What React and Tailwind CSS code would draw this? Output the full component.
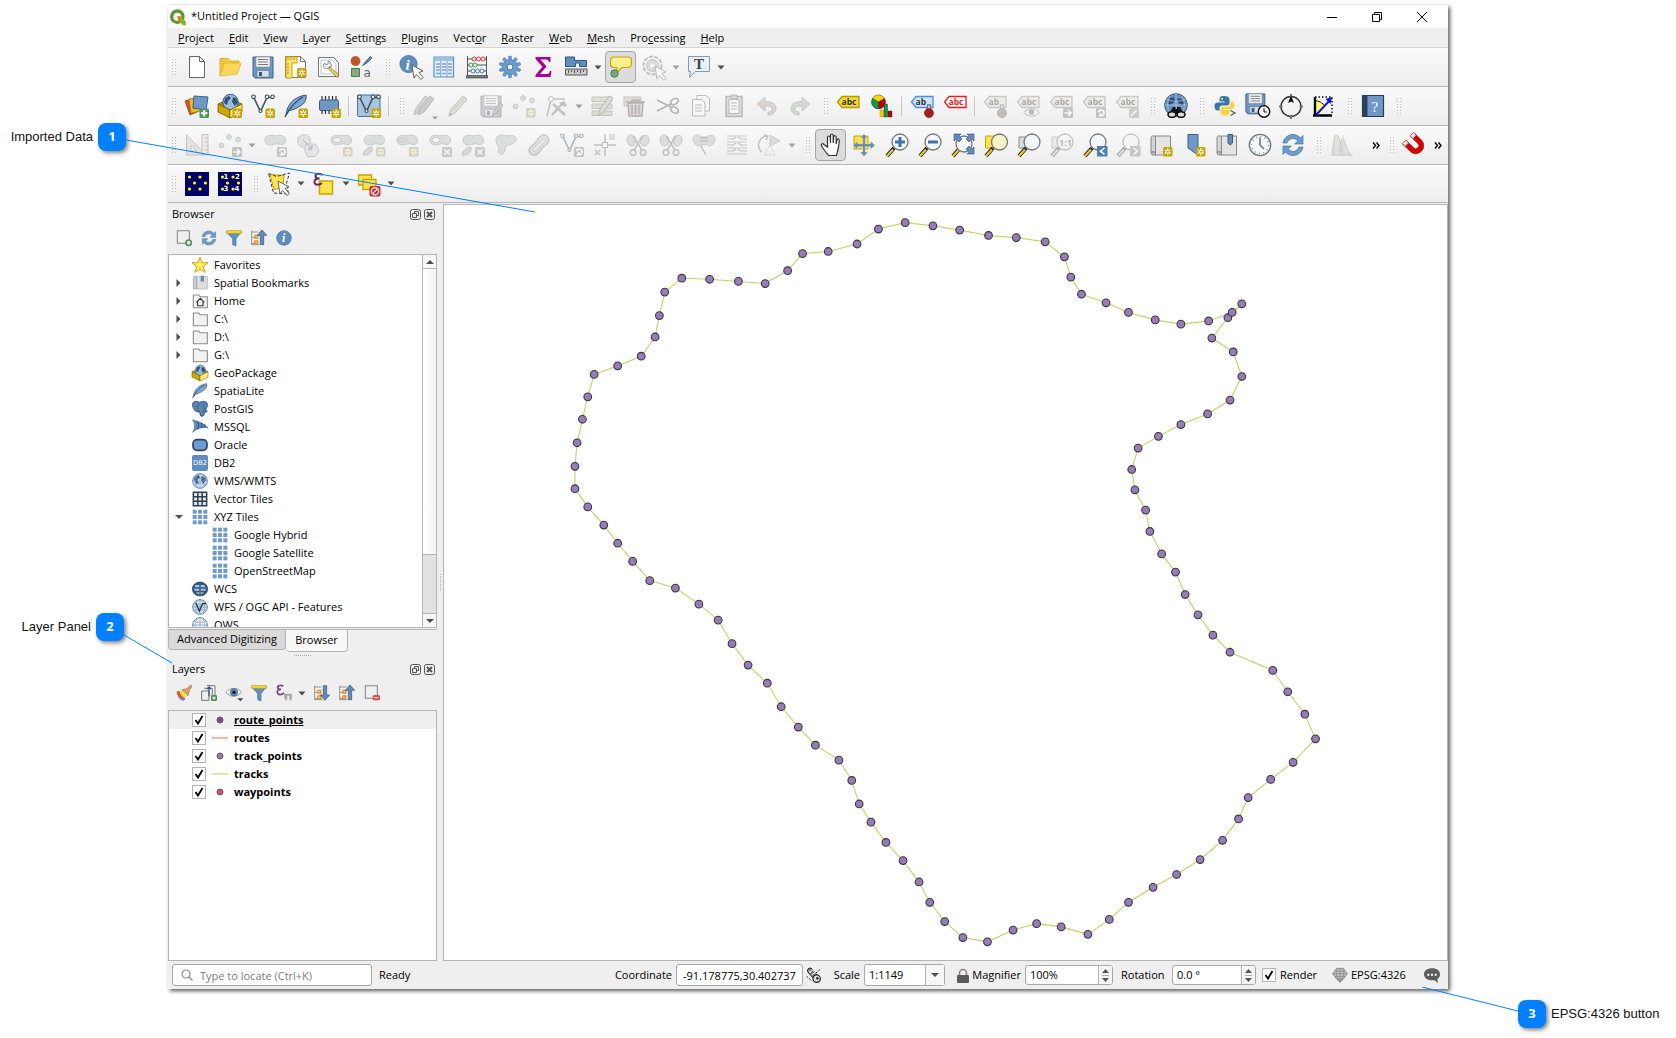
import React from "react";

const Svg = ({ children, size = "size-6", box = "0 0 24 24" }) => (
  <svg viewBox={box} className={`${size} shrink-0 overflow-visible`} fill="none" aria-hidden="true">
    {children}
  </svg>
);

/* ---------- small corner badges ---------- */
const Star = ({ x = 14.5, y = 14.5 }) => (
  <g transform={`translate(${x} ${y})`}>
    <rect width="9.5" height="9.5" rx="1.5" fill="#c9a400" />
    <path d="M4.75 1.2v7.1M1.7 3l6.1 3.5M7.8 3L1.7 6.5" stroke="#fff" strokeWidth="1.3" />
    <circle cx="4.75" cy="4.75" r="1" fill="#c9a400" />
  </g>
);
const Plus = () => (
  <g>
    <rect x="14.5" y="14.5" width="9.5" height="9.5" rx="1.5" fill="#4f9160" />
    <path d="M19.25 16v6.5M16 19.25h6.5" stroke="#fff" strokeWidth="2" />
  </g>
);
const Square = ({ d, fill = "#7d7d7d" }) => (
  <g>
    <rect x="14" y="14" width="10" height="10" rx="1.5" fill={fill} />
    <path d={d} stroke="#fff" strokeWidth="1.7" />
  </g>
);
const ARROW = "M15.5 19h6M19 16l3 3-3 3";
const CROSS = "M16.5 16.5l5 5M21.5 16.5l-5 5";
const TURN = "M16.5 18.5a2.8 2.8 0 1 1 2.5 3.2M19 19v2.700h-2.500";

/* ---------- project toolbar ---------- */
const NewDoc = () => (
  <Svg><path d="M4.500 1.500h10l5 5v16h-15z" fill="#fff" stroke="#666" /><path d="M14.500 1.500v5h5" stroke="#666" /></Svg>
);
const Open = () => (
  <Svg><path d="M2 20.500V3.500h8l2 2.500h9v3H6z" fill="#f3c73c" stroke="#d8a716" strokeWidth=".8" /><path d="M2 21L6 8h17l-3.500 11z" fill="#fbd55c" stroke="#e0af25" strokeWidth=".7" /></Svg>
);
const Floppy = () => (
  <g>
    <path d="M2 2h20v21H4l-2-2z" fill="#6d97c8" stroke="#3f6186" />
    <path d="M5 2h14v10H5z" fill="#f5f5f5" stroke="#888" strokeWidth=".6" />
    <path d="M7 4.500h10M7 7h10M7 9.500h10" stroke="#777" />
    <path d="M6 15.500h12V22H6z" fill="#d9e2ea" stroke="#55708c" strokeWidth=".6" />
    <path d="M8 17h3v4H8z" fill="#375877" />
  </g>
);
const Save = () => <Svg><Floppy /></Svg>;
const Layout = () => (
  <Svg>
    <path d="M1.500 1.500h15l5 5v16h-20z" fill="#fff" stroke="#777" /><path d="M16.500 1.500v5h5" stroke="#777" />
    <path d="M2 2h11v6H8v15H2z" fill="#ffe36b" stroke="#c9a400" /><path d="M4 3v2M7 3v2M10 3v2M3 9h2M3 12h2M3 15h2M3 18h2" stroke="#b38d00" />
    <Star x={13} y={13} />
  </Svg>
);
const LayoutMgr = () => (
  <Svg>
    <path d="M1.500 2.500h15l5 5v14h-20z" fill="#fff" stroke="#777" /><path d="M4 5h11l4 4v10H4z" stroke="#9ac" strokeWidth=".7" />
    <path d="M8 8a3 3 0 1 0 4 4l3-1-2-4-2-1v3l-2 1z" fill="#eee" stroke="#777" strokeWidth=".8" />
    <path d="M13 12l9 8-1.500 2.500L11.500 14z" fill="#f0cf56" stroke="#8e7430" strokeWidth=".8" />
  </Svg>
);
const StyleMgr = () => (
  <Svg>
    <circle cx="5.500" cy="6" r="4.500" fill="#ca5128" stroke="#9c3b18" strokeWidth=".6" />
    <path d="M12.500 10.500l3-4 5-5 1.500 1.500-5 5z" fill="#5b88b8" stroke="#3d5e80" strokeWidth=".8" />
    <path d="M1.500 13.500h8v8h-8z" fill="#82b07c" stroke="#4c7a4a" />
    <text x="13.500" y="22" fontSize="12" fill="#666" fontFamily="DejaVu Sans">a</text>
  </Svg>
);
const Cursor = ({ x = 12, y = 9 }) => (
  <path transform={`translate(${x} ${y})`} d="M0 0l11 6-4 1.500 4 5-2 2-4.500-5L2 13z" fill="#fff" stroke="#555" strokeWidth=".9" />
);
const Identify = () => (
  <Svg><circle cx="9.500" cy="9" r="8.700" fill="#5f8dc0" stroke="#4876a8" strokeWidth=".6" /><text x="6.500" y="14.500" fontSize="15" fontStyle="italic" fontWeight="700" fill="#fff" fontFamily="Liberation Serif">i</text><Cursor x={13} y={10} /></Svg>
);
const Table = () => (
  <Svg><path d="M2 2h19.500v20H2z" fill="#e6f0fa" stroke="#5f8dc0" strokeWidth="1.200" /><path d="M2.500 2.500h18.500v3.500H2.500z" fill="#9dc1e6" /><path d="M4 9h4M10 9h4M16 9h4M4 12h4M10 12h4M16 12h4M4 15h4M10 15h4M16 15h4M4 18.500h4M10 18.500h4M16 18.500h4" stroke="#7ea3cc" strokeWidth="1.500" /><path d="M8.800 6v16M15 6v16" stroke="#5f8dc0" strokeWidth=".8" /></Svg>
);
const Abacus = () => (
  <Svg><path d="M2.500 1v20M21.500 1v20M2.500 4h19M2.500 10h19M2.500 16h19" stroke="#555" /><path d="M1.500 20.500h21v2.500h-21z" fill="#777" stroke="#333" strokeWidth=".6" />
    {[9, 13.5, 18].map((x) => <circle key={x} cx={x} cy="4" r="2" fill="#fff" stroke="#d33" />)}
    {[6, 10].map((x) => <circle key={x} cx={x} cy="10" r="2" fill="#fff" stroke="#3a9a4b" />)}
    {[8, 12.5, 17].map((x) => <circle key={x} cx={x} cy="16" r="2" fill="#fff" stroke="#4778b5" />)}
  </Svg>
);
const Gear = () => (
  <Svg>
    {[0, 36, 72, 108, 144, 180, 216, 252, 288, 324].map((a) => <rect key={a} x="10.500" y="1" width="3" height="6" rx="1" fill="#6c9bd0" stroke="#4474a8" strokeWidth=".5" transform={`rotate(${a} 12 12)`} />)}
    <circle cx="12" cy="12" r="7.500" fill="#6c9bd0" stroke="#4b7db3" strokeWidth=".6" /><circle cx="12" cy="12" r="3" fill="#f4f4f4" stroke="#4474a8" />
  </Svg>
);
const Sigma = () => (
  <Svg><path d="M4.500 2h15v5h-1.500c-.5-2-1.500-2.500-3-2.500H9.500l6 7-6.500 7.500h7c2 0 2.500-1 3-3h1.500l-1 6h-15v-2l7-8.300L4.500 4z" fill="#a3009c" /></Svg>
);
const Measure = () => (
  <Svg><path d="M1.500 2h9v3.500h12v6h-7V8h-4v3.500h-10z" fill="#5f8dc0" stroke="#36597f" /><path d="M1.500 14h21.500v6h-21.500z" fill="#ccc" stroke="#555" /><path d="M4.500 15v3M7.500 15v2M10.500 15v3M13.500 15v2M16.500 15v3M19.500 15v2" stroke="#555" /></Svg>
);
const MapTip = () => (
  <Svg><path d="M5 2h14c2 0 3.500 1 3.500 3.500v3c0 2-1.500 4-3.500 4h-6L7.500 18l.5-5.500H5c-2 0-3.500-1.500-3.500-4v-3C1.500 3 3 2 5 2z" fill="#fbf08d" stroke="#c9a400" strokeWidth="1.200" /><circle cx="5.500" cy="18.500" r="3.700" fill="#75a97a" stroke="#487a50" /></Svg>
);
const Action = () => (
  <Svg><circle cx="10.500" cy="10.500" r="9" stroke="#777" strokeDasharray="4 1.500" strokeWidth="2" /><circle cx="10.500" cy="10.500" r="6" fill="#a3b6c6" stroke="#68839a" /><path d="M8.500 7.500l5 3-5 3z" fill="#fff" /><Cursor x={13} y={11} /></Svg>
);
const TextNote = () => (
  <Svg><path d="M1.500 1.500h21v15H8l-5.500 6 1-6h-2z" fill="#e9f1f7" stroke="#8a9ba8" /><text x="7" y="14" fontSize="15" fontWeight="700" fill="#444" fontFamily="Liberation Serif">T</text></Svg>
);

/* ---------- data source and digitizing toolbars ---------- */
const DataSource = () => (
  <Svg><path d="M0 7l9-3 5 13-9 4z" fill="#ca5128" stroke="#8f3414" strokeWidth=".7" /><path d="M4 5l10-1 2 13-10 2z" fill="#eebc22" stroke="#a37b00" strokeWidth=".7" /><path d="M9 2l14 1-2 13-13-2z" fill="#6d97c8" stroke="#3c5f87" /><Plus /></Svg>
);
const Pack = () => (
  <g>
    <path d="M0 10l12-5 12 5-12 6z" fill="#b79200" stroke="#6f5b00" strokeWidth=".8" />
    <circle cx="12.500" cy="8" r="7.700" fill="#9bbbdc" stroke="#37597e" />
    <path d="M7 4l4-2 2 2-3 3-1 4-3-2zM15 3l3 1 2 4-3 4-3-4z" fill="#2f5278" />
    <path d="M0 10l12 6v8L0 18z" fill="#cfa700" stroke="#6f5b00" strokeWidth=".8" />
    <path d="M12 16l12-6v8l-12 6z" fill="#fff06a" stroke="#6f5b00" strokeWidth=".8" />
  </g>
);
const GeoPackageNew = () => <Svg><Pack /><Star /></Svg>;
const VShape = () => (
  <g stroke="#3d5266" strokeWidth="1.200"><path d="M2.500 3l7 14.500L16 3.500h5.500" strokeWidth="1.600" /><circle cx="2.500" cy="2.800" r="1.800" fill="#fff" /><circle cx="16" cy="2.800" r="1.800" fill="#fff" /><circle cx="21.500" cy="2.800" r="1.800" fill="#fff" /><circle cx="9.500" cy="17" r="1.500" fill="#fff" /></g>
);
const ShapeNew = () => <Svg><VShape /><Star /></Svg>;
const FeatherPath = () => (
  <g><path d="M2 21C3 11 9 3 22 1c1 5-2 9-6 11-4 3-8 4-10.500 4.500z" fill="#7fa8d4" stroke="#34597f" /><path d="M1 23C5 15 10 8 19 3" stroke="#2d4d70" strokeWidth="1.300" /></g>
);
const SpatiaNew = () => <Svg><FeatherPath /><Star /></Svg>;
const Chip = () => (
  <Svg><path d="M5 2v18M8.500 2v18M12 2v18M15.500 2v18M19 2v18" stroke="#333" strokeWidth="1.200" /><rect x="2.500" y="6" width="19" height="10.500" rx="1.500" fill="#6d97c8" stroke="#3c5f87" /><Star /></Svg>
);
const Virtual = () => (
  <Svg><rect x=".500" y="1" width="22.500" height="21.500" rx="1" fill="#a9c4df" stroke="#4d7298" /><VShape /><Star /></Svg>
);
const Pencil = ({ d = "M3 22l2-7L17 2l4 3L9 19z" }) => (
  <g><path d={d} fill="#d8c48c" stroke="#7b6f50" /><path d="M3 22l1-3 2 1.500z" fill="#444" /><path d="M6.500 16.500L19 3.500" stroke="#8b7b50" /></g>
);
const Edits = () => (
  <Svg><path d="M1 21l1.500-6L12 2l4 2L7 18z" fill="#b7a27d" stroke="#7b6f50" /><path d="M5 21l2-7L17 2l4 3L11 18z" fill="#a29076" stroke="#6b614a" /><path d="M19 22.500h6l-3 3z" fill="#222" /></Svg>
);
const EditPencil = () => <Svg><Pencil /></Svg>;
const SaveEdits = () => <Svg><Floppy /><path d="M13 22l2-5 6-8 3 2-7 9z" fill="#c08070" stroke="#7a5548" /></Svg>;
const Dots = () => (
  <g fill="#a9b3ba" stroke="#7c868c" strokeWidth=".8"><circle cx="3.500" cy="12.500" r="2.500" /><circle cx="11" cy="4" r="2.500" /><circle cx="20" cy="6.500" r="2.500" /></g>
);
const AddPoint = () => <Svg><Dots /><Star x={14} y={14} /></Svg>;
const MovePoint = () => <Svg><Dots /><Square d={ARROW} /></Svg>;
const Vertex = () => (
  <Svg><path d="M2 22L6 5h14" stroke="#777" strokeWidth="1.500" /><circle cx="6" cy="5" r="2.500" fill="#fff" stroke="#666" /><path d="M8 10l12 11M18 9L7 21" stroke="#887b58" strokeWidth="2.500" /><path d="M14 9l5-2 3 4-2 2z" fill="#777" /></Svg>
);
const ModifyAttr = () => (
  <Svg><path d="M2 3h20v4.500H2zM2 10h20v4.500H2zM2 17h20v4.500H2z" fill="#c9bf7e" stroke="#887f4b" /><path d="M8 21l2-6 9-13 4 2-10 15z" fill="#c8b59c" stroke="#6f6450" /></Svg>
);
const Trash = () => (
  <Svg><path d="M1 3h17v9H1z" fill="#c9bf7e" stroke="#887f4b" /><path d="M3 8h19M9 8V6h7v2M5 9l1 13h13l1-13z" fill="#d9a6a6" stroke="#7d4444" strokeWidth="1.400" /><path d="M9 11v9M12.500 11v9M16 11v9" stroke="#7d4444" strokeWidth="1.400" /></Svg>
);
const Cut = () => (
  <Svg><path d="M1 6l14 7M1 17l14-7" stroke="#555" strokeWidth="1.800" /><ellipse cx="18.500" cy="7.500" rx="4" ry="2.700" transform="rotate(-30 18.500 7.500)" stroke="#555" strokeWidth="1.600" /><ellipse cx="18.500" cy="16" rx="4" ry="2.700" transform="rotate(30 18.500 16)" stroke="#555" strokeWidth="1.600" /></Svg>
);
const Copy = () => (
  <Svg><path d="M8 1.500h9l3.500 3.500v12H8z" fill="#fff" stroke="#666" /><path d="M3.500 5.500h9l3.500 3.500v13H3.500z" fill="#fff" stroke="#666" /><path d="M6 11h7M6 14h7M6 17h7" stroke="#666" /></Svg>
);
const Paste = () => (
  <Svg><path d="M4 2.500h16v20H4z" fill="#c9c1a8" stroke="#666" strokeWidth="1.500" /><path d="M7 5.500h10v14H7z" fill="#fff" stroke="#666" /><path d="M9 1h6v4H9z" fill="#aaa" stroke="#666" /><path d="M9 9h6M9 12h6M9 15h6" stroke="#666" /></Svg>
);
const Undo = () => <Svg><path d="M2 10l8-7v4.500c8 0 11 3 11 7 0 4-4 6.500-8 6.500v-3c3 0 4-1 4-3s-2-3-7-3v5z" fill="#c9a08c" stroke="#8f7060" strokeWidth=".8" /></Svg>;
const Redo = () => <Svg><path d="M22 10l-8-7v4.500c-8 0-11 3-11 7 0 4 4 6.500 8 6.500v-3c-3 0-4-1-4-3s2-3 7-3v5z" fill="#9db09c" stroke="#6e806e" strokeWidth=".8" /></Svg>;

/* ---------- label toolbar ---------- */
const Tag = ({ fill, stroke, text = "abc", color = "#333" }) => (
  <g><path d="M6 5.500h17v11H6L1.500 11z" fill={fill} stroke={stroke} strokeWidth="1.300" /><text x="5.500" y="14" fontSize="8.500" fontWeight="700" fill={color} fontFamily="Open Sans">{text}</text></g>
);
const LabelYellow = () => <Svg><g transform="translate(-1 -3)"><Tag fill="#f5da2a" stroke="#b89600" /></g></Svg>;
const Diagram = () => (
  <Svg>
    <g stroke="#222" strokeWidth=".4">
      <path d="M8.500 8L2.400 4.500a7 7 0 0 1 12.200 0z" fill="#ffd500" />
      <path d="M8.500 8v7A7 7 0 0 1 2.400 4.500z" fill="#0a9b47" />
      <path d="M8.500 8l6.100-3.500A7 7 0 0 1 8.500 15z" fill="#c00000" />
      <path d="M10 16h3.500v7H10z" fill="#ffc700" stroke="#e07000" /><path d="M14 10h3.500v13H14z" fill="#0a9b47" /><path d="M18 17h4v6h-4z" fill="#c00000" />
    </g>
  </Svg>
);
const Pin = ({ c = "#a81d1d" }) => <g><path d="M17.500 15v-4h3v4" stroke="#777" strokeWidth="1.300" fill="#ddd" /><circle cx="19" cy="19" r="4.500" fill={c} stroke="#7a1010" strokeWidth=".6" /></g>;
const LabelBlue = () => <Svg><g transform="translate(0 -3)"><Tag fill="#cfe2f7" stroke="#4390e0" text="ab" /></g><Pin /></Svg>;
const LabelRed = () => <Svg><g transform="translate(0 -3)"><Tag fill="#fff" stroke="#f01818" color="#f01818" /></g></Svg>;
const LabelGray = ({ children, text = "abc" }) => <Svg><g transform="translate(0 -3)"><Tag fill="#e6dfbc" stroke="#8e8765" text={text} /></g>{children}</Svg>;
const LPin = () => <LabelGray text="ab"><Pin c="#9a6b6b" /></LabelGray>;
const LEye = () => <LabelGray><path d="M8 18.500c4-5 11-5 15 0-4 5-11 5-15 0z" fill="#fff" stroke="#666" /><circle cx="15.500" cy="18" r="2.700" fill="#567" /></LabelGray>;
const LMove = () => <LabelGray><Square d={ARROW} /></LabelGray>;
const LTurn = () => <LabelGray><Square d={TURN} /></LabelGray>;
const LEdit = () => <LabelGray><Square d="M16 22l5.500-5.500" fill="#a39a72" /></LabelGray>;

const MetaSearch = () => (
  <Svg><circle cx="12" cy="11" r="11.300" fill="#6b93c0" stroke="#3c5f87" /><path d="M5 4l5-1 1 4-4 4-3-1zM13 4l5 1 3 5-4 1-3-3z" fill="#2f5278" /><path d="M1 11h22M12 0v22M3 5c5 3 13 3 18 0M6 2c-3 6-3 12 0 18M18 2c3 6 3 12 0 18" stroke="#a9c4e2" strokeWidth=".8" /><path d="M9 13h2.500v2h1.500v-2H16l4 7H5z" fill="#111" /><ellipse cx="8" cy="20.500" rx="4" ry="2.800" fill="#ddd" stroke="#111" strokeWidth="1.600" /><ellipse cx="17" cy="20.500" rx="4" ry="2.800" fill="#ddd" stroke="#111" strokeWidth="1.600" /></Svg>
);
const Python = () => (
  <Svg><path d="M11 2c-4 0-4.500 1.500-4.500 3v2.500h5v1H4.500C2 8.500 1.500 11 1.500 12.500 1.500 15 3 16.500 4.500 16.500h2V14c0-1.500 1-2.500 2.500-2.500h5c1.500 0 2.500-1 2.500-2.500V5c0-2-2-3-5.500-3z" fill="#3a75a6" /><circle cx="9" cy="4.800" r="1" fill="#fff" /><path d="M12 21.500c4 0 4.500-1.500 4.500-3V16h-5v-1h7c2 0 3-2 3-4S20.500 7.500 19 7.500h-1.500v2.500c0 1.500-1 2.700-2.500 2.700h-5c-1.500 0-2.500 1-2.500 2.500v3.300c0 2 1.500 3 4.500 3z" fill="#ffd242" /><path d="M17.500 16.500l4.500 2.500-4.500 2.500" stroke="#555" strokeWidth="1.200" /></Svg>
);
const SaveClock = () => (
  <Svg><g transform="translate(-2 -2) scale(.95)"><Floppy /></g><circle cx="18" cy="17.500" r="5.700" fill="#fff" stroke="#111" strokeWidth="1.500" /><path d="M18 14v4h3" stroke="#111" /></Svg>
);
const Compass = () => (
  <Svg><circle cx="12" cy="12.500" r="10" stroke="#333" strokeWidth="1.400" /><path d="M12 0v4M12 21v4M0 12.500h3.500M20.500 12.500H24" stroke="#777" strokeWidth="2" /><path d="M12 1.500l3 7.500-3-1.500L9 9z" fill="#000" /></Svg>
);
const Azimuth = () => (
  <Svg><path d="M3 3h17v18" stroke="#111" strokeDasharray="1.500 2" strokeWidth="1.500" /><path d="M3 21V6.500c6 1 9 4 10 5.500z" fill="#ffff70" stroke="#222" /><path d="M3 3v19M1 21.500h19" stroke="#000" strokeWidth="2.400" /><path d="M4 21L19 5" stroke="#1515e8" strokeWidth="2" /><path d="M20 3l-1.500 7-5-5z" fill="#1515e8" /></Svg>
);
const Help = () => (
  <Svg><path d="M1.500 1.500h21v21h-21z" fill="#6d97c8" stroke="#2d3e50" strokeWidth="1.200" /><path d="M1.500 1.500h5v21h-5z" fill="#2d4258" /><text x="10.500" y="17.500" fontSize="15" fill="#fff" fontFamily="Liberation Serif">?</text></Svg>
);

/* ---------- advanced digitizing ---------- */
const SetSquare = () => <Svg><path d="M1.500 2v20h20z" fill="#dcc9b5" stroke="#8a7c6b" /><path d="M6 12.500V18h6z" fill="#f5f5f5" stroke="#8a7c6b" /><path d="M17 1.500h6v20h-6z" fill="#e4dcb8" stroke="#8a7c6b" /><path d="M20 5h3M20 9h3M20 13h3M20 17h3" stroke="#777" /></Svg>;
const Blob = () => <path d="M2 7c0-4 4-5.500 8-4.500 4 1 5-1 9 0 5 1.500 4.500 9 0 9-3 0-4-1.500-7-.5-5 2-10 1-10-4z" fill="#b3beb6" stroke="#7f8a80" />;
const Hole = () => <ellipse cx="8" cy="7" rx="4" ry="2.500" fill="#fafafa" stroke="#7f8a80" />;
const Rotate = () => <Svg><Blob /><Square d={TURN} /></Svg>;
const Simplify = () => <Svg><circle cx="8" cy="8" r="6.500" fill="#c2cbc4" stroke="#7f8a80" /><path d="M10 11h9l4 6.500-3.500 6h-8l-3-6z" fill="#cbd5dd" stroke="#7f8a80" /><path d="M7 7l9 9M16 12v4h-4" stroke="#444" /></Svg>;
const AddRing = () => <Svg><Blob /><Hole /><Star x={14} y={14} /></Svg>;
const AddPart = () => <Svg><Blob /><path d="M1 22c1-6 6-8 9-8 1 3-1 9-9 8z" fill="#a9b3aa" stroke="#7f8a80" /><Star x={14} y={14} /></Svg>;
const FillRing = () => <Svg><Blob /><ellipse cx="8" cy="7" rx="4" ry="2.500" fill="#aab5ac" stroke="#7f8a80" /><Star x={14} y={14} /></Svg>;
const DelRing = () => <Svg><Blob /><Hole /><Square d={CROSS} fill="#a88" /></Svg>;
const DelPart = () => <Svg><Blob /><path d="M1 22c1-6 6-8 9-8 1 3-1 9-9 8z" fill="#a9b3aa" stroke="#7f8a80" /><Square d={CROSS} fill="#a88" /></Svg>;
const Reshape = () => <Svg><path d="M2 7c0-5 6-6 10-4 4 0 8-2 10 2 1 4-3 6-8 7-3 1-2 5-5 9-3 1-6-2-4-7-2-2-3-4-3-7z" fill="#b6c0b8" stroke="#7f8a80" /></Svg>;
const Offset = () => <Svg><path d="M3 20c-3-4 1-7 5-10 3-3 4-8 9-8 5 1 6 6 3 9-3 2-5 4-7 7-3 5-8 5-10 2z" fill="#c2cbc4" stroke="#7f8a80" strokeWidth="1.500" /><path d="M6 18c-1-2 1-4 4-6 3-3 4-6 7-6 2 1 2 3 0 4-3 2-4 4-6 6-2 3-4 3-5 2z" fill="#d5dcd6" stroke="#7f8a80" /></Svg>;
const SplitV = () => <Svg><VShape /><Square d={TURN} /></Svg>;
const SplitF = () => <Svg><path d="M12 1v22M1 12h22" stroke="#777" strokeWidth="1.500" strokeDasharray="8 6 8" /><rect x="9.500" y="9.500" width="5" height="5" fill="#fff" stroke="#777" /><rect x="16" y="1" width="6" height="6" fill="#bfb9a0" /><path d="M2 17l5 5M7 17l-5 5" stroke="#b88" strokeWidth="2" /></Svg>;
const Scissor = () => <Svg><path d="M1 6c0-5 6-5 8-2s0 9-3 9-5-3-5-7zM15 4c3-3 8-2 8 2s-2 7-5 7-6-6-3-9z" fill="#b3beb6" stroke="#7f8a80" /><path d="M7 3l9 14M17 3L8 17" stroke="#777" strokeWidth="1.500" /><circle cx="7" cy="19.500" r="2.700" stroke="#777" strokeWidth="1.500" /><circle cx="17" cy="19.500" r="2.700" stroke="#777" strokeWidth="1.500" /></Svg>;
const Merge = () => <Svg><path d="M1 6c0-5 6-5 8-2l6 0c3-3 8-2 8 2s-3 7-6 7c-2-2-6-2-9 0-4 0-7-3-7-7z" fill="#b3beb6" stroke="#7f8a80" /><path d="M8 5h8M8 8h8M9 13l5 9" stroke="#777" strokeWidth="1.400" /></Svg>;
const Align = () => <Svg><path d="M2 3h20M2 9h20M2 15h20M2 21h20" stroke="#888" strokeWidth="1.200" /><path d="M2 6h6l3-2M22 6h-6l-3-2M2 12h6l3-2M22 12h-6l-3-2M2 18h6l3-2M22 18h-6l-3-2" stroke="#777" strokeWidth="1.200" /></Svg>;
const RotSym = () => <Svg><path d="M4 19A9 9 0 0 1 9 3M6 2l4 1-2 4" stroke="#777" strokeWidth="1.400" /><path d="M12 2l10 6-10 5z" fill="#bbb" stroke="#888" /><path d="M12 12l5 10H6z" stroke="#999" strokeDasharray="2 1" /></Svg>;

/* ---------- map navigation ---------- */
const Hand = () => <Svg><path d="M8.500 14V4.500c0-2 2.500-2 2.700 0L11.500 10V2.500c.2-2 2.500-2 2.700 0V10l.5-6c.3-2 2.500-1.500 2.500.3V11l.8-4c.5-1.700 2.500-1.200 2.300.5-.3 4-.8 6-1.300 9l-1.500 6h-8L6 18 2.500 13c-1-2 1.200-3 2.500-1.500z" fill="#fff" stroke="#333" strokeWidth="1.200" /></Svg>;
const PanSel = () => <Svg><path d="M2 3h14v13H2z" fill="#ffe24a" stroke="#c9a400" /><path d="M12 1l4 4h-2.700v5.700H18.500V8l4.500 4.300-4.500 4.200v-2.700h-5.200V19H16l-4 4.500L8 19h2.700v-5.200H5.500v2.700L1 12.300 5.500 8v2.700h5.200V5H8z" fill="#5f8dc0" stroke="#ffe98a" strokeWidth=".5" /></Svg>;
const Lens = ({ x = 15, y = 9, children, fill = "#f4f6f8" }) => (
  <g><path d="M2 23L9 15" stroke="#222" strokeWidth="4" /><path d="M2 23L8 16.500" stroke="#f4c430" strokeWidth="2.200" /><circle cx={x} cy={y} r="8" fill={fill} stroke="#777" strokeWidth="1.300" />{children}</g>
);
const ZoomIn = () => <Svg><Lens><path d="M15 4v10M10 9h10" stroke="#4272a8" strokeWidth="3" /></Lens></Svg>;
const ZoomOut = () => <Svg><Lens><path d="M10 9h10" stroke="#4272a8" strokeWidth="3" /></Lens></Svg>;
const ZoomFull = () => <Svg><Lens x={13} y={11} /><g fill="#5f8dc0" stroke="#2f4f74" strokeWidth=".6"><path d="M3 1h7L8 3l3 3-3 3-3-3-2 2zM23 1h-7l2 2-3 3 3 3 3-3 2 2zM23 21h-7l2-2-3-3 3-3 3 3 2-2z" /></g></Svg>;
const ZoomSel = () => <Svg><path d="M1.500 3h12v12h-12z" fill="#ffe24a" stroke="#c9a400" /><Lens x={15.500} fill="#f7f2c8" /></Svg>;
const ZoomLayer = () => <Svg><path d="M2 4h12v11H2z" fill="#ddd" stroke="#888" /><Lens /></Svg>;
const ZoomNative = () => <Svg><path d="M2 4h12v11H2z" fill="#ddd" stroke="#888" /><Lens><text x="9" y="12.500" fontSize="9" fontWeight="700" fill="#555" fontFamily="Open Sans">1:1</text></Lens></Svg>;
const ZoomLast = () => <Svg><Lens /><rect x="14" y="13" width="10.500" height="10.500" fill="#4c7fb5" /><path d="M21.500 15l-4 3.200 4 3.200" stroke="#fff" strokeWidth="1.600" /></Svg>;
const ZoomNext = () => <Svg><Lens /><rect x="14" y="13" width="10.500" height="10.500" fill="#888" /><path d="M17.500 15l4 3.200-4 3.200" stroke="#fff" strokeWidth="1.600" /></Svg>;
const Scroll = ({ children }) => <Svg><path d="M6 3h15.500v19H6z" fill="#e4e4e4" stroke="#888" /><path d="M2 5c0-3 4.500-3 4.500 0v14h-4.500z" fill="#d4d4d4" stroke="#888" /><path d="M2 19h4.500v3H4c-1.500 0-2-1-2-3z" fill="#bbb" stroke="#888" />{children}</Svg>;
const NewMap = () => <Scroll><Star x={14} y={14} /></Scroll>;
const NewBookmark = () => <Svg><path d="M6 1.500h10V22l-5-3.500L6 15z" fill="#6d97c8" stroke="#3c5f87" /><Star x={14} y={14} /></Svg>;
const Bookmarks = () => <Scroll><path d="M13 1.500h4.500V10l-2.200 2L13 10z" fill="#5f8dc0" stroke="#36597f" /></Scroll>;
const Clock = () => <Svg><circle cx="12" cy="12" r="10.700" fill="#f4f6f8" stroke="#777" strokeWidth="1.300" /><circle cx="12" cy="12" r="8.500" stroke="#5f8dc0" strokeWidth="1.500" strokeDasharray="1 3.450" /><path d="M12 4.500V12l4 4" stroke="#777" strokeWidth="1.600" /></Svg>;
const RefreshG = () => <g fill="#6d9bd1" stroke="#44729f" strokeWidth=".7"><path d="M2 10C3 4 8 1.500 12 1.500c3 0 6 1.500 7.500 3.500L22 2.500V11h-8.500L17 8c-3.500-4-9-3-11 2z" /><path d="M22 14c-1 6-6 8.500-10 8.500-3 0-6-1.500-7.500-3.500L2 21.500V13h8.500L7 16c3.500 4 9 3 11-2z" /></g>;
const Refresh = ({ size }) => <Svg size={size}><RefreshG /></Svg>;
const Histogram = () => <Svg><path d="M2 22C4 5 5 1 7 2c3 1 4 12 6 20zM10 22c0-10 1-16 3-16 3 1 3 14 9 16z" fill="#b9cfb0" stroke="#888" /><path d="M4 2v20M13 2v20M1 22h22" stroke="#c9a0a0" /></Svg>;
const Magnet = () => <Svg><g transform="rotate(-45 12 12)"><path d="M4 3h5v10a3 3 0 0 0 6 0V3h5v10a8 8 0 0 1-16 0z" fill="#d40000" stroke="#900" strokeWidth=".6" /><path d="M4 2h5v4H4zM15 2h5v4h-5z" fill="#eee" stroke="#b33" strokeWidth=".8" /></g></Svg>;

/* ---------- selection toolbar ---------- */
const PointGrid = ({ nums }) => (
  <Svg><rect width="24" height="24" fill="#000066" />
    {[[4.5, 5], [15, 5], [9.5, 11], [20.5, 11], [4.5, 17], [15, 17]].map(([x, y]) => <circle key={`${x}-${y}`} cx={x} cy={y} r="1.600" fill="#ff0" />)}
    {nums && <g fill="#fff" fontSize="7" fontWeight="700" fontFamily="DejaVu Sans"><text x="5.500" y="6.500">1</text><text x="17" y="6.500">2</text><text x="5.500" y="18.500">3</text><text x="16.500" y="18.500">4</text></g>}
  </Svg>
);
const PointsA = () => <PointGrid />;
const PointsB = () => <PointGrid nums />;
const Select = () => <Svg><path d="M3 2.500l14 1-1 12-9 2z" fill="#fbe54e" stroke="#c9a400" /><path d="M1.500 1.500l8 3 13-3.500-3 10 2 11-15-1z" stroke="#333" strokeDasharray="3 2" /><Cursor x={11} y={9} /></Svg>;
const SelectExpr = () => <Svg><path d="M7.500 9h13v13h-13z" fill="#fbe54e" stroke="#c9a400" strokeWidth="1.500" /><path d="M10.500 3C7 .5 3 2 3.500 4.500c.3 1.500 2 2 4 2-3 0-5.500 1-5 4C3 13 7 13.500 10 11" stroke="#5c2d63" strokeWidth="2" /></Svg>;
const Deselect = () => <Svg><path d="M1.500 3h13v10h-13z" fill="#fbe54e" stroke="#c9a400" strokeWidth="1.300" /><path d="M6 7.500h13v10H6z" fill="#fbe54e" stroke="#c9a400" strokeWidth="1.300" /><rect x="12.500" y="14" width="11" height="10.500" rx="2" fill="#d8262c" /><circle cx="18" cy="19.200" r="3.600" stroke="#fff" strokeWidth="1.300" /><path d="M15.700 21.600l4.600-4.700" stroke="#fff" strokeWidth="1.300" /></Svg>;

/* ---------- toolbar building blocks ---------- */
const Handle = ({ first }) => (
  <span className={`flex h-full shrink-0 items-center justify-end pr-1 ${first ? "w-3" : "w-4"}`}>
    <span className="h-[18px] w-[5px] bg-[radial-gradient(circle,#bdbdbd_0.7px,transparent_1px)] bg-[length:3px_3px]" />
  </span>
);
const Sep = () => <span className="mx-[3px] h-5 w-px shrink-0 bg-[#c8c8c8]" />;
const Caret = ({ off }) => (
  <button type="button" aria-label="More options" className={`flex h-8 w-3 shrink-0 items-center justify-center ${off ? "opacity-50" : ""}`}>
    <svg viewBox="0 0 8 5" className="h-[5px] w-2"><path d="M.5.5h7L4 4.500z" fill="#4d4d4d" /></svg>
  </button>
);
const Tool = ({ icon: Icon, off, on, name }) => (
  <button type="button" aria-label={name} className={`mx-px flex h-8 w-[31px] shrink-0 items-center justify-center rounded-sm border ${on ? "border-[#a6a6a6] bg-[#dcdcdc]" : "border-transparent"}`}>
    <span className={off ? "opacity-40 saturate-[.3]" : ""}><Icon /></span>
  </button>
);
const More = ({ wide }) => (
  <button type="button" aria-label="Show more tools" className={`flex h-8 shrink-0 items-center justify-center ${wide ? "w-6 pl-3" : "w-[14px]"}`}>
    <svg viewBox="0 0 8 7" className="h-[7px] w-2" fill="none"><path d="M1 .5l2.500 3L1 6.500M4.500.5l2.500 3-2.500 3" stroke="#000" strokeWidth="1.400" /></svg>
  </button>
);

const H = "handle", S = "sep", C = "caret", CO = "caret-off";
const off = (...icons) => icons.map((icon) => ({ icon, off: true }));
const on = (...icons) => icons.map((icon) => ({ icon }));

const ROWS = [
  [...on(NewDoc, Open, Save, Layout, LayoutMgr, StyleMgr), H, ...on(Identify, Table, Abacus, Gear, Sigma, Measure), C, { icon: MapTip, on: true }, ...off(Action), CO, ...on(TextNote), C],
  [...on(DataSource, GeoPackageNew, ShapeNew, SpatiaNew, Chip), S, ...on(Virtual), S, H, ...off(Edits, EditPencil, SaveEdits, AddPoint, Vertex), CO, ...off(ModifyAttr, Trash, Cut, Copy, Paste, Undo, Redo), H, ...on(LabelYellow, Diagram), S, ...on(LabelBlue, LabelRed), S, ...off(LPin, LEye, LMove, LTurn, LEdit), H, ...on(MetaSearch), H, ...on(Python, SaveClock, Compass, Azimuth), H, ...on(Help), H],
  [...off(SetSquare, MovePoint), CO, ...off(Rotate, Simplify, AddRing, AddPart, FillRing, DelRing, DelPart, Reshape, Offset, SplitV, SplitF, Scissor, Scissor, Merge, Align, RotSym), CO, H, { icon: Hand, on: true }, ...on(PanSel, ZoomIn, ZoomOut, ZoomFull, ZoomSel, ZoomLayer), ...off(ZoomNative), ...on(ZoomLast), ...off(ZoomNext), ...on(NewMap, NewBookmark, Bookmarks, Clock, Refresh), H, ...off(Histogram), "more-wide", H, ...on(Magnet), "more"],
  [...on(PointsA, PointsB), H, ...on(Select), C, ...on(SelectExpr), C, ...on(Deselect), C],
];

const Toolbar = ({ items, last }) => (
  <div role="toolbar" className={`flex shrink-0 items-center overflow-hidden border-b border-[#b4b4b4] bg-linear-to-b from-[#fafafa] to-[#ededed] ${last ? "h-[38px]" : "h-[39px]"}`}>
    <Handle first />
    {items.map((it, i) => {
      if (it === H) return <Handle key={i} />;
      if (it === S) return <Sep key={i} />;
      if (it === C || it === CO) return <Caret key={i} off={it === CO} />;
      if (it === "more" || it === "more-wide") return <More key={i} wide={it === "more-wide"} />;
      return <Tool key={i} {...it} name={it.icon.name} />;
    })}
  </div>
);

/* ---------- 16px icons, drawn on the 24 grid ---------- */
const s4 = "size-4";
const FavStar = () => <Svg size={s4}><path d="M12 0l3 8.500 9 .2-7 5.300 2.500 9L12 18l-7.500 5L7 14 0 8.700l9-.2z" fill="#fff06a" stroke="#d6a900" strokeWidth="1.500" /></Svg>;
const SpBook = () => <Svg size={s4}><path d="M7 2h16v19H7z" fill="#dedede" stroke="#aaa" /><path d="M2 4c0-3 5-3 5 0v17H2z" fill="#ccc" stroke="#999" /><path d="M13 1h5v10l-2.500-2L13 11z" fill="#5f8dc0" /></Svg>;
const Folder = () => <Svg size={s4}><path d="M2 3h8l2 2.500h11V22H2z" fill="#f2f2f2" stroke="#8a8a8a" strokeWidth="1.600" /></Svg>;
const HomeIcon = () => <Svg size={s4}><path d="M2 3h8l2 2.500h11V22H2z" fill="#f2f2f2" stroke="#8a8a8a" strokeWidth="1.600" /><path d="M6.500 14L12.500 8l6 6M8.500 13v6h8v-6" stroke="#333" strokeWidth="1.600" /></Svg>;
const GeoPkg = () => <Svg size={s4}><Pack /></Svg>;
const Feather = () => <Svg size={s4}><FeatherPath /></Svg>;
const Postgis = () => <Svg size={s4}><path d="M1 3c2-3 7-3 10-1 4-2 11-2 12 2 .5 4-1 7-3 10l3 1c-1 2-3 2-4.500 2 0 3-.5 6-3.500 6s-3-3-3-7c-1.500 1.500-3 1-4 0C4 17 0 8 1 3z" fill="#5b83b2" stroke="#2f5278" strokeWidth="1.400" /><path d="M10 3c-2 4-2 8 0 13M17 4c1 4 2 8 0 12" stroke="#2f5278" /></Svg>;
const Mssql = () => <Svg size={s4}><path d="M1 1c7 3 16 4 23 12-8-1-16 0-23 7C5 14 5 7 1 1z" fill="#5f8dc0" stroke="#36597f" /><path d="M8 4c3 4 2 8 0 11M14 6c1.500 3 1 5 0 7.500M19 8c.5 2 0 3-1 4" stroke="#2c4766" strokeWidth="1.500" /></Svg>;
const Oracle = () => <Svg size={s4}><rect x="1.500" y="4" width="21" height="16" rx="6" fill="#6d9bd1" stroke="#2d4560" strokeWidth="2.500" /></Svg>;
const Db2 = () => <Svg size={s4}><rect width="24" height="24" rx="3" fill="#5f8dc0" /><text x="1.500" y="15.500" fontSize="10" fill="#fff" fontFamily="DejaVu Sans">DB2</text></Svg>;
const Globe = ({ fill = "#cfdeef", land }) => <g><circle cx="12" cy="12" r="11" fill={fill} stroke="#5f86b3" strokeWidth="1.500" />{land && <path d="M4 6l6-3 2 4-4 3 2 5-3 2-4-6zM14 5l6 1 1 5-4 5-3-4z" fill="#37597e" />}<path d="M1 12h22M12 1v22M3 6c5 3 13 3 18 0M3 18c5-3 13-3 18 0M8 2c-4 6-4 14 0 20M16 2c4 6 4 14 0 20" stroke="#7d9fc7" /></g>;
const Wms = () => <Svg size={s4}><Globe land /></Svg>;
const Wcs = () => <Svg size={s4}><ellipse cx="12" cy="12" rx="11.500" ry="10.500" fill="#37597e" stroke="#1f364f" /><path d="M5 6h6v3.500H4zM13 6h5l2 3.500h-7zM3 11.500h8v3H4zM13 11.500h8l-1 3h-7zM6 17h5v3.500zM13 17h5l-5 3.500z" fill="#a9c4e2" /></Svg>;
const Wfs = () => <Svg size={s4}><Globe /><path d="M6 6l5 12 5-11h5" stroke="#333" strokeWidth="2" /></Svg>;
const Ows = () => <Svg size={s4}><Globe fill="#eef4fa" /></Svg>;
const VTiles = () => <Svg size={s4}><path d="M2 2h20v20H2zM2 8.700h20M2 15.300h20M8.700 2v20M15.300 2v20" fill="#dfe8f2" stroke="#2f3f52" strokeWidth="2.200" /></Svg>;
const Tiles = () => <Svg size={s4}>{[1, 9, 17].map((y) => [1, 9, 17].map((x) => <rect key={`${x}${y}`} x={x} y={y} width="6" height="6" fill="#6f9acb" />))}</Svg>;

const AddLayer = () => <Svg size={s4}><path d="M2 1h18v19H2z" stroke="#888" strokeWidth="1.600" /><circle cx="19" cy="19" r="4" fill="#eee" stroke="#4f9160" strokeWidth="2.500" /></Svg>;
const RemoveLayer = () => <Svg size={s4}><path d="M2 1h18v19H2z" stroke="#888" strokeWidth="1.600" /><rect x="13" y="15" width="11" height="8" rx="2.500" fill="#e2444c" /><path d="M15.500 19h6" stroke="#fff" strokeWidth="1.800" /></Svg>;
const Funnel = () => <Svg size={s4}><path d="M1 3h22l-8 10v11l-5-2v-9z" fill="#6090c4" stroke="#44729f" /><path d="M1 1h22v4H1z" fill="#f6dd3a" stroke="#b89600" /></Svg>;
const Tree = ({ up }) => <Svg size={s4}><path d="M1 1v21M1 3h10M1 11h6M1 20h6M1 22h12" stroke="#888" strokeWidth="1.300" /><path d="M6 8h4v4H6zM6 16.500h4v4H6z" fill="#fff" stroke="#ef8a17" strokeWidth="2" /><path d={up ? "M16.500 0l7 8h-4.500v14h-5V8H9.500z" : "M16.500 23l7-8h-4.500V1h-5v14H9.500z"} fill="#5f8dc0" stroke="#2f4f74" /></Svg>;
const Collapse = () => <Tree up />;
const Expand = () => <Tree />;
const Info = () => <Svg size={s4}><circle cx="12" cy="12" r="11" fill="#5f8dc0" stroke="#4272a8" /><text x="9" y="18.500" fontSize="18" fontStyle="italic" fontWeight="700" fill="#fff" fontFamily="Liberation Serif">i</text></Svg>;
const RefreshSmall = () => <Refresh size={s4} />;
const Brush = () => <Svg size={s4}><path d="M1 10l6-2 9 8-4 6c-5 0-9-5-11-12z" fill="#f7dc3c" /><path d="M1 10l4-1c1 5 4 9 9 11l-2 3C6 22 2 17 1 10z" fill="#e0503a" /><path d="M3 17l4 2 7 2-3 3c-4-1-7-3-8-7z" fill="#5b9bd8" /><path d="M9 7l6-1 2-1 5-5 2 2-4 6-1 4-1 4z" fill="#dba463" stroke="#9b6a3a" /></Svg>;
const Group = () => <Svg size={s4}><path d="M1 9h11v14H1zM5 5h12v14M9 1h12v18" stroke="#777" strokeWidth="1.500" /><path d="M12 17V3l-3 3M12 3l3 3" stroke="#36597f" strokeWidth="2" /><rect x="15" y="15" width="9" height="9" rx="2" fill="#4f9160" /><path d="M19.500 17v5M17 19.500h5" stroke="#fff" strokeWidth="1.500" /></Svg>;
const Eye = () => <Svg size={s4}><path d="M0 11c6-8 17-8 23 0-6 8-17 8-23 0z" fill="#fff" stroke="#999" strokeWidth="1.500" /><circle cx="12" cy="11" r="5.500" fill="#5f8dc0" stroke="#36597f" /><circle cx="12" cy="11" r="2.500" fill="#111" /><path d="M17 20h9l-4.500 4.500z" fill="#444" /></Svg>;
const ExprFilter = () => <Svg size={s4}><path d="M11 2C7-.5 2 1 2.500 4c.3 2 2.500 2.500 5 2.500C4 6.500 1.500 8 2 11c.5 4 6 4.500 10 1" stroke="#7a4a83" strokeWidth="2.600" /><path d="M12 13h12v5l-1 5h-3v-7h-3v7h-3l-2-5z" fill="#aaa" /></Svg>;

const PanelTool = ({ icon: Icon }) => (
  <button type="button" aria-label={Icon.name} className="flex h-6 w-[25px] shrink-0 items-center justify-center"><Icon /></button>
);

const TREE = [
  ["Favorites", FavStar], ["Spatial Bookmarks", SpBook, ">"], ["Home", HomeIcon, ">"], ["C:\\", Folder, ">"], ["D:\\", Folder, ">"], ["G:\\", Folder, ">"],
  ["GeoPackage", GeoPkg], ["SpatiaLite", Feather], ["PostGIS", Postgis], ["MSSQL", Mssql], ["Oracle", Oracle], ["DB2", Db2], ["WMS/WMTS", Wms], ["Vector Tiles", VTiles],
  ["XYZ Tiles", Tiles, "v"], ["Google Hybrid", Tiles, "child"], ["Google Satellite", Tiles, "child"], ["OpenStreetMap", Tiles, "child"],
  ["WCS", Wcs], ["WFS / OGC API - Features", Wfs], ["OWS", Ows],
];

const LAYERS = [
  { name: "route_points", dot: "#7e5277", active: true },
  { name: "routes", line: "#f6b5a9" },
  { name: "track_points", dot: "#957db8" },
  { name: "tracks", line: "#dde7a8" },
  { name: "waypoints", dot: "#d94f70" },
];

const DockTitle = ({ title }) => (
  <div className="flex h-[22px] shrink-0 items-center gap-[3px] pr-[2px] pl-1">
    <h2 className="flex-1">{title}</h2>
    <button type="button" aria-label={`Float ${title}`}><svg viewBox="0 0 11 11" className="size-[11px]" fill="none" stroke="#555"><rect x=".5" y=".5" width="10" height="10" rx="2" /><path d="M2.500 4.500h4v4h-4zM4.500 4.500v-2h4v4h-2" /></svg></button>
    <button type="button" aria-label={`Close ${title}`}><svg viewBox="0 0 11 11" className="size-[11px]" fill="none" stroke="#555"><rect x=".5" y=".5" width="10" height="10" rx="2" /><path d="M3 3l5 5M8 3l-5 5" strokeWidth="2" /></svg></button>
  </div>
);

const Tri = ({ d }) => <svg viewBox="0 0 8 8" className="size-2"><path d={d} fill="#4d4d4d" /></svg>;

const BrowserPanel = () => (
  <section className="flex shrink-0 flex-col">
    <DockTitle title="Browser" />
    <div className="flex h-[29px] items-center pb-1 pl-[3px]">
      {[AddLayer, RefreshSmall, Funnel, Collapse, Info].map((icon, i) => <PanelTool key={i} icon={icon} />)}
    </div>
    <div className="flex h-[374px] border border-[#b4b4b4] bg-white">
      <ul className="flex-1 overflow-hidden pt-px">
        {TREE.map(([label, Icon, mode]) => (
          <li key={label} className={`flex h-[18px] items-center whitespace-nowrap ${mode === "child" ? "pl-[43px]" : "pl-[6px]"}`}>
            {mode !== "child" && (
              <span className="flex w-[17px] justify-start">
                {mode === ">" && <Tri d="M1.500 0l4 4-4 4z" />}
                {mode === "v" && <Tri d="M0 2h8L4 6z" />}
              </span>
            )}
            <Icon />
            <span className="pl-[6px]">{label}</span>
          </li>
        ))}
      </ul>
      <div className="flex w-[14px] flex-col border-l border-[#b4b4b4] bg-[#e2e2e2]">
        <button type="button" aria-label="Scroll up" className="flex h-[14px] items-center justify-center border-b border-[#b4b4b4] bg-[#f7f7f7]"><Tri d="M0 6h8L4 2z" /></button>
        <div className="h-[286px] border-b border-[#b4b4b4] bg-linear-to-r from-white to-[#f3f3f3]" />
        <div className="flex-1" />
        <button type="button" aria-label="Scroll down" className="flex h-[14px] items-center justify-center border-t border-[#b4b4b4] bg-[#f7f7f7]"><Tri d="M0 2h8L4 6z" /></button>
      </div>
    </div>
    <div role="tablist" className="mt-px flex h-[23px] items-start border-t border-[#b4b4b4]">
      <button type="button" role="tab" aria-selected="false" className="h-5 w-[118px] rounded-b-sm border border-t-0 border-[#b4b4b4] bg-[#dadada]">Advanced Digitizing</button>
      <button type="button" role="tab" aria-selected="true" className="h-[22px] w-[62px] rounded-b-sm border border-t-0 border-l-0 border-[#b4b4b4] bg-[#f8f8f8]">Browser</button>
    </div>
  </section>
);

const LayersPanel = () => (
  <section className="flex min-h-0 flex-1 flex-col">
    <DockTitle title="Layers" />
    <div className="flex h-[30px] items-center pb-1 pl-[3px]">
      {[Brush, Group, Eye, Funnel, ExprFilter].map((icon, i) => <PanelTool key={i} icon={icon} />)}
      <Caret />
      <span className="w-px" />
      {[Expand, Collapse, RemoveLayer].map((icon, i) => <PanelTool key={i} icon={icon} />)}
    </div>
    <ul className="min-h-0 flex-1 border border-[#b4b4b4] bg-white">
      {LAYERS.map((l) => (
        <li key={l.name} className={l.active ? "bg-[#efefef]" : ""}>
          <label className="flex h-[18px] items-center pl-[23px] font-bold">
            <CheckBox />
            <svg viewBox="0 0 16 16" className="ml-[6px] h-4 w-4">
              {l.dot ? <circle cx="8" cy="8" r="3" fill={l.dot} stroke="#5a5460" strokeWidth="1" /> : <path d="M0 8h16" stroke={l.line} strokeWidth="2" />}
            </svg>
            <span className={`pl-[6px] ${l.active ? "underline" : ""}`}>{l.name}</span>
          </label>
        </li>
      ))}
    </ul>
  </section>
);

const CheckBox = ({ id }) => (
  <span className="relative flex size-[14px] shrink-0">
    <input id={id} type="checkbox" defaultChecked className="peer size-[14px] appearance-none border border-[#b4b4b4] bg-white" />
    <svg viewBox="0 0 14 14" className="pointer-events-none absolute inset-0 hidden size-[14px] peer-checked:block" fill="none"><path d="M3.500 7l2.500 3.500L10.500 3" stroke="#000" strokeWidth="1.800" /></svg>
  </span>
);

const TRACK = "1162,284 1149,297 1134,316 1154,329 1162,352 1151,374 1130,387 1105,397 1084,408 1065,419 1059,439 1062,458 1072,477 1076,497 1087,518 1100,535 1109,556 1121,575 1135,594 1151,610 1191,627 1205,647 1221,668 1231,691 1210,713 1189,729 1168,746 1159,766 1144,786 1123,804 1101,818 1079,830 1056,844 1038,860 1018,874 993,867 970,864 948,870 924,881 901,877 884,862 870,844 860,825 845,805 829,788 815,769 804,752 797,730 785,711 763,697 747,680 731,661 718,639 700,622 685,602 672,580 654,565 632,550 608,543 592,525 578,508 565,491 550,474 538,457 538,436 540,414 545,392 550,371 556,350 578,342 600,333 613,315 617,295 622,273 638,260 664,261 691,263 716,265 737,253 751,237 775,235 802,228 822,214 847,208 873,211 898,215 925,220 951,222 978,226 996,240 1002,259 1012,275 1035,283 1056,292 1081,299 1105,303 1131,300 1153,292";
const POINTS = TRACK.split(" ").map((p) => p.split(",").map(Number));

const MapCanvas = () => (
  <main className="mt-px min-h-0 min-w-0 flex-1 border border-[#b4b4b4] bg-white">
    <svg viewBox="415.500 191.500 938.500 706.500" className="block size-full" role="img" aria-label="Map canvas">
      <polyline points={`${TRACK} 1162,284`} fill="none" stroke="#c3d264" strokeWidth="1" />
      {POINTS.map(([x, y]) => <circle key={`${x}-${y}`} cx={x} cy={y} r="3.600" fill="#957db8" stroke="#3a3342" strokeWidth="1" />)}
    </svg>
  </main>
);

const Spin = ({ id, value, width }) => (
  <span className={`flex h-5 shrink-0 overflow-hidden rounded-[3px] border border-[#a8a8a8] bg-white ${width}`}>
    <input id={id} type="text" defaultValue={value} className="min-w-0 flex-1 px-1 outline-none" />
    <span className="flex w-[14px] flex-col items-center justify-center gap-[2px] border-l border-[#b4b4b4] bg-[#f6f6f6]">
      <button type="button" aria-label="Increase"><svg viewBox="0 0 7 4" className="h-1 w-[7px]"><path d="M0 4h7L3.500 0z" fill="#555" /></svg></button>
      <span className="h-px w-[7px] bg-[#aaa]" />
      <button type="button" aria-label="Decrease"><svg viewBox="0 0 7 4" className="h-1 w-[7px]"><path d="M0 0h7L3.500 4z" fill="#555" /></svg></button>
    </span>
  </span>
);

const StatusBar = () => (
  <footer className="flex h-7 shrink-0 items-center pr-2 pl-1 whitespace-nowrap">
    <span className="relative flex w-[200px] shrink-0 items-center">
      <svg viewBox="0 0 12 12" className="absolute left-[9px] size-3" fill="none" stroke="#888" strokeWidth="1.200"><circle cx="5" cy="5" r="4" /><path d="M8 8l3.500 3.500" /></svg>
      <input type="search" aria-label="Type to locate" placeholder="Type to locate (Ctrl+K)" className="h-[22px] w-full rounded-[3px] border border-[#a8a8a8] bg-white pl-[27px] outline-none placeholder:text-[#7d7d7d]" />
    </span>
    <span className="pl-[7px]">Ready</span>
    <span className="flex-1" />
    <label htmlFor="coord">Coordinate</label>
    <input id="coord" type="text" defaultValue="-91.178775,30.402737" className="ml-1 h-[22px] w-[127px] rounded-[3px] border border-[#a8a8a8] bg-white px-[6px] outline-none" />
    <button type="button" aria-label="Toggle extents" className="ml-[3px]"><Svg size="size-4"><path d="M3 3c2-2 5-2 7 1l8 10-5 5L4 9C2 7 2 5 3 3z" fill="#777" stroke="#222" strokeWidth="1.500" /><path d="M5 8l6-4M8 12l6-4M4 5l3 4M10 4l4 6" stroke="#eee" strokeWidth="1.500" /><path d="M15 9l8-7M1 14l8 7" stroke="#222" strokeDasharray="3 2" strokeWidth="1.500" /><circle cx="16" cy="17.500" r="5.500" fill="#ddd" stroke="#222" strokeWidth="1.800" /><circle cx="17" cy="17" r="2" fill="#333" /></Svg></button>
    <label htmlFor="scale" className="w-[42px] pr-[4px] text-right">Scale</label>
    <span className="relative flex shrink-0">
      <select id="scale" defaultValue="1:1149" className="h-[22px] w-[81px] appearance-none rounded-[3px] border border-[#a8a8a8] bg-white pl-1 outline-none"><option>1:1149</option></select>
      <span className="pointer-events-none absolute inset-y-px right-px flex w-[19px] items-center justify-center border-l border-[#b4b4b4] bg-[#f6f6f6]"><Tri d="M0 2h8L4 6z" /></span>
    </span>
    <button type="button" aria-label="Lock scale" className="ml-3"><svg viewBox="0 0 12 15" className="h-[15px] w-3" fill="none"><path d="M2.500 8V5a3.500 3.500 0 0 1 7 0v3" stroke="#888" strokeWidth="1.600" /><rect y="7" width="12" height="8" rx="1" fill="#5c5c5c" /></svg></button>
    <label htmlFor="mag" className="w-[56px] pr-1 text-right">Magnifier</label>
    <Spin id="mag" value="100%" width="w-[88px]" />
    <label htmlFor="rot" className="w-[59px] pl-2">Rotation</label>
    <Spin id="rot" value="0.0 °" width="w-[84px]" />
    <span className="ml-[6px] flex"><CheckBox id="render" /></span>
    <label htmlFor="render" className="w-[56px] pl-1">Render</label>
    <button type="button" className="flex items-center gap-[3px]">
      <Svg size="size-4"><path d="M7 2h10l6 8-6 8-5 5-5-5-6-8z" fill="#c4c4c4" stroke="#666" /><path d="M1 10h22M12 2v21M4 6h16M4 14h16M8 18h8M8 3c-3 6-2 12 4 19M16 3c3 6 2 12-4 19" stroke="#777" strokeWidth=".9" /></Svg>
      <span className="w-[54px] text-left">EPSG:4326</span>
    </button>
    <button type="button" aria-label="Messages" className="ml-[19px]"><Svg size="size-4"><path d="M12 2C5 2 0 5.500 0 11s5 9 12 9h4l5 4-1-6c3-2 4-4 4-7 0-5.500-5-9-12-9z" fill="#5c5c5c" /><path d="M5 10h3v3H5zM10.500 10h3v3h-3zM16 10h3v3h-3z" fill="#fff" /></Svg></button>
  </footer>
);

const MENUS = [["", "P", "roject"], ["", "E", "dit"], ["", "V", "iew"], ["", "L", "ayer"], ["", "S", "ettings"], ["", "P", "lugins"], ["Vect", "o", "r"], ["", "R", "aster"], ["", "W", "eb"], ["", "M", "esh"], ["Pro", "c", "essing"], ["", "H", "elp"]];

const Badge = ({ n }) => (
  <span className="flex size-7 shrink-0 items-center justify-center rounded-lg bg-[#0080ff] font-['Open_Sans',sans-serif] text-[13px] font-bold text-white shadow-[2px_2px_4px_rgba(0,0,0,0.5)]">{n}</span>
);

export default function App() {
  return (
    <div className="flex h-screen min-h-[700px] bg-white font-['Liberation_Sans',Arial,sans-serif] text-[13px] text-[#111]">
      <aside className="relative z-10 w-[168px] shrink-0">
        <div className="mt-[123px] mr-[42px] flex items-center justify-end gap-[5px]">Imported Data <Badge n="1" /></div>
        <div className="mt-[462px] mr-11 flex items-center justify-end gap-[5px]">Layer Panel <Badge n="2" /></div>
        <svg className="pointer-events-none absolute top-0 left-0 h-[700px] w-[560px]" aria-hidden="true">
          <path d="M126 140L535 212M124 635L172 663" stroke="#0080ff" strokeWidth="1" />
        </svg>
      </aside>

      <div className="mt-[5px] mb-[49px] flex min-w-0 flex-1 flex-col bg-[#efefef] font-['Open_Sans',sans-serif] text-[11px] text-black shadow-[2px_2px_4px_rgba(0,0,0,0.65)]">
        <header className="flex h-[23px] shrink-0 items-center bg-white pl-[2px]">
          <Svg size="size-4"><circle cx="11" cy="11.500" r="8.500" stroke="#589632" strokeWidth="5" /><path d="M12 12h5l7 7v5h-5l-7-7z" fill="#93b023" /><path d="M11 10.500l5 .5 1.500 2-3 3-3-1z" fill="#ee7913" /></Svg>
          <h1 className="flex-1 pl-[5px]">*Untitled Project — QGIS</h1>
          <button type="button" aria-label="Minimize" className="flex w-[46px] justify-center"><svg viewBox="0 0 10 10" className="size-[10px]"><path d="M0 5.500h10" stroke="#000" /></svg></button>
          <button type="button" aria-label="Restore" className="flex w-11 justify-center"><svg viewBox="0 0 10 10" className="size-[10px]" fill="none" stroke="#000"><path d="M.5 2.500h7v7h-7zM2.500 2.500v-2h7v7h-2" /></svg></button>
          <button type="button" aria-label="Close" className="mr-[3px] flex w-[46px] justify-center"><svg viewBox="0 0 10 10" className="size-[10px]" stroke="#000"><path d="M0 0l10 10M10 0L0 10" /></svg></button>
        </header>
        <nav className="flex h-5 shrink-0 items-center gap-[15px] border-b border-[#d4d4d4] pt-px pl-[10px]">
          {MENUS.map(([a, b, c]) => <button type="button" key={a + b + c}>{a}<u>{b}</u>{c}</button>)}
        </nav>
        {ROWS.map((items, i) => <Toolbar key={i} items={items} last={i === ROWS.length - 1} />)}
        <div className="flex min-h-0 flex-1">
          <div className="flex w-[269px] shrink-0 flex-col">
            <BrowserPanel />
            <div className="flex h-[6px] shrink-0 items-center justify-center"><span className="h-px w-[17px] border-t border-dotted border-[#aaa]" /></div>
            <LayersPanel />
          </div>
          <div className="flex w-[6px] shrink-0 items-center justify-center"><span className="h-[17px] w-px border-l border-dotted border-[#aaa]" /></div>
          <MapCanvas />
        </div>
        <StatusBar />
      </div>

      <aside className="relative z-10 flex w-[228px] shrink-0 items-end">
        <div className="mb-[10px] ml-[70px] flex items-center gap-[5px] whitespace-nowrap"><Badge n="3" /> EPSG:4326 button</div>
        <svg className="pointer-events-none absolute bottom-0 -left-[26px] h-[51px] w-[96px]" aria-hidden="true"><path d="M0 0l96 24" stroke="#0080ff" strokeWidth="1" /></svg>
      </aside>
    </div>
  );
}
